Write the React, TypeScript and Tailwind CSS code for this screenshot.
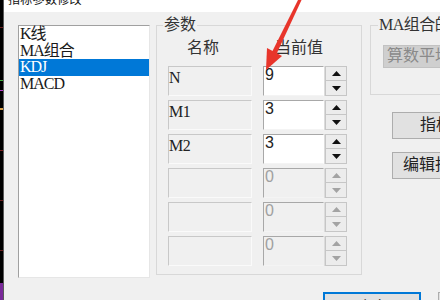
import React from "react";

const Up = ({ dis }: { dis?: boolean }) => (
  <svg width="9" height="5" viewBox="0 0 9 5">
    <path d="M0 5 L4.5 0 L9 5 Z" fill={dis ? "#a3a3a3" : "#111"} />
  </svg>
);
const Down = ({ dis }: { dis?: boolean }) => (
  <svg width="9" height="5" viewBox="0 0 9 5">
    <path d="M0 0 L9 0 L4.5 5 Z" fill={dis ? "#a3a3a3" : "#111"} />
  </svg>
);

const Row = ({ name, value, dis }: { name: string; value: string; dis?: boolean }) => (
  <div className="flex h-[30px] shrink-0">
    <div className="w-[84px] h-[30px] border border-t-[#c8c8c8] border-l-[#c8c8c8] border-r-[#fafafa] border-b-[#fafafa] bg-[#f0f0f0] pl-[0px] pt-[3px] text-[16px] leading-[16px] text-[#222] font-['Liberation_Serif',serif] tracking-[-0.5px]">
      {name}
    </div>
    <div className="ml-[11px] flex w-[84px] h-[30px]">
      <div
        className={`w-[61px] h-[30px] border border-t-[#a8a8a8] border-l-[#a8a8a8] border-r-transparent border-b-[#f4f4f4] pl-[1px] text-[16px] leading-[16px] font-['Liberation_Sans',sans-serif] ${
          dis ? "bg-[#f0f0f0] text-[#a0a0a0]" : "bg-white text-[#222]"
        }`}
      >
        {value}
      </div>
      <div className="w-[23px] h-[30px] flex flex-col border-l border-[#dcdcdc]">
        <div className="h-[15px] flex items-center justify-center border border-[#c6c6c6] bg-[#ececec]">
          <Up dis={dis} />
        </div>
        <div className="h-[15px] flex items-center justify-center border border-t-0 border-[#c6c6c6] bg-[#ececec]">
          <Down dis={dis} />
        </div>
      </div>
    </div>
  </div>
);

export default function App() {
  const cjk = "font-['Liberation_Serif','Noto_Sans_CJK_SC',serif]";
  return (
    <div className={`w-[440px] h-[300px] overflow-hidden relative bg-[#f0f0f0] flex ${cjk}`}>
      {/* background chart strip */}
      <div className="w-[4px] h-[300px] bg-black relative shrink-0 border-r border-[#5a5a5a]">
        <div className="absolute left-0 top-[27px] w-[3px] h-[1px] bg-[#6a1f1f]" />
        <div className="absolute left-0 top-[80px] w-[3px] h-[1px] bg-[#3fae3f]" />
        <div className="absolute left-0 top-[90px] w-[3px] h-[1px] bg-[#b43cc8]" />
        <div className="absolute left-0 top-[108px] w-[3px] h-[2px] bg-[#d9a04a]" />
        <div className="absolute left-0 top-[150px] w-[3px] h-[1px] bg-[#7a2020]" />
        <div className="absolute left-0 top-[200px] w-[3px] h-[1px] bg-[#6a1f1f]" />
        <div className="absolute left-0 top-[250px] w-[3px] h-[1px] bg-[#6a1f1f]" />
        <div className="absolute left-0 top-[283px] w-[3px] h-[17px] bg-[#7a2a9a]" />
      </div>

      <div className="flex flex-col shrink-0 w-[436px]">
        {/* title bar */}
        <div className="h-[12px] bg-white overflow-hidden pl-[4px] shrink-0">
          <div className="-mt-[7px] text-[12px] leading-[12px] text-[#111] font-['Noto_Sans_CJK_SC',sans-serif] tracking-[0.3px]">
            指标参数修改
          </div>
        </div>

        {/* main row */}
        <div className="flex pl-[14px] pt-[13px] shrink-0">
          {/* list */}
          <div className="w-[132px] h-[253px] shrink-0 bg-white border border-t-[#a0a0a0] border-l-[#a0a0a0] border-r-[#e6e6e6] border-b-[#e6e6e6] text-[16px] text-[#1a1a1a]">
            <div className="h-[16.5px] leading-[16.5px] pl-[1px] tracking-[-1px]">K线</div>
            <div className="h-[16.5px] leading-[16.5px] pl-[1px] tracking-[-1px]">MA组合</div>
            <div className="h-[16.5px] leading-[16.5px] pl-[1px] tracking-[-1px] bg-[#0078d7] text-white">KDJ</div>
            <div className="h-[16.5px] leading-[16.5px] pl-[1px] tracking-[-1px]">MACD</div>
          </div>

          {/* params group */}
          <div className="ml-[6px] w-[206px] h-[250px] shrink-0 relative border border-[#d8d8d8]">
            <div className="absolute -top-[9px] left-[6px] bg-[#f0f0f0] px-[1px] text-[16px] leading-[16px] text-[#333]">
              参数
            </div>
            <div className="flex pt-[14px] text-[16px] leading-[16px] text-[#333]">
              <div className="ml-[30px]">名称</div>
              <div className="ml-[56px]">当前值</div>
            </div>
            <div className="mt-[10px] ml-[11px] flex flex-col gap-[4px]">
              <Row name="N" value="9" />
              <Row name="M1" value="3" />
              <Row name="M2" value="3" />
              <Row name="" value="0" dis />
              <Row name="" value="0" dis />
              <Row name="" value="0" dis />
            </div>
          </div>

          {/* right column */}
          <div className="ml-[8px] flex flex-col shrink-0">
            <div className="w-[130px] h-[70px] relative border border-[#d8d8d8]">
              <div className="absolute -top-[9px] left-[7px] bg-[#f0f0f0] px-[1px] text-[16px] leading-[16px] text-[#333] tracking-[-0.5px] whitespace-nowrap">
                MA组合的参数
              </div>
              <div className="mt-[19px] ml-[12px] w-[110px] h-[23px] bg-[#cfcfcf] border border-[#c2c2c2] pl-[3px] text-[16px] leading-[20px] text-[#8a8a8a] whitespace-nowrap">
                算数平均
              </div>
            </div>
            <div className="mt-[17px] ml-[22px] w-[120px] h-[27px] bg-[#e1e1e1] border border-[#adadad] pl-[27px] text-[16px] leading-[24px] text-[#222] whitespace-nowrap">
              指标用法
            </div>
            <div className="mt-[13px] ml-[22px] w-[120px] h-[27px] bg-[#e1e1e1] border border-[#adadad] pl-[10px] text-[16px] leading-[24px] text-[#222] whitespace-nowrap">
              编辑指标
            </div>
          </div>
        </div>

        {/* bottom buttons */}
        <div className="flex pl-[319px] mt-[14px] shrink-0">
          <div className="w-[98px] h-[27px] shrink-0 bg-[#e1e1e1] border-2 border-[#0078d7] pt-[3px] text-center text-[16px] leading-[22px] text-[#222]">
            确定
          </div>
          <div className="ml-[17px] w-[98px] h-[27px] shrink-0 bg-[#e1e1e1] border border-[#adadad]" />
        </div>
      </div>

      {/* red annotation arrow */}
      <svg className="absolute left-0 top-0 pointer-events-none" width="440" height="300" viewBox="0 0 440 300">
        <polygon points="299,-2 302,-1 276.5,54 272,52" fill="#e8352b" />
        <polygon points="266,70 282,56 267,48" fill="#e8352b" />
      </svg>
    </div>
  );
}
